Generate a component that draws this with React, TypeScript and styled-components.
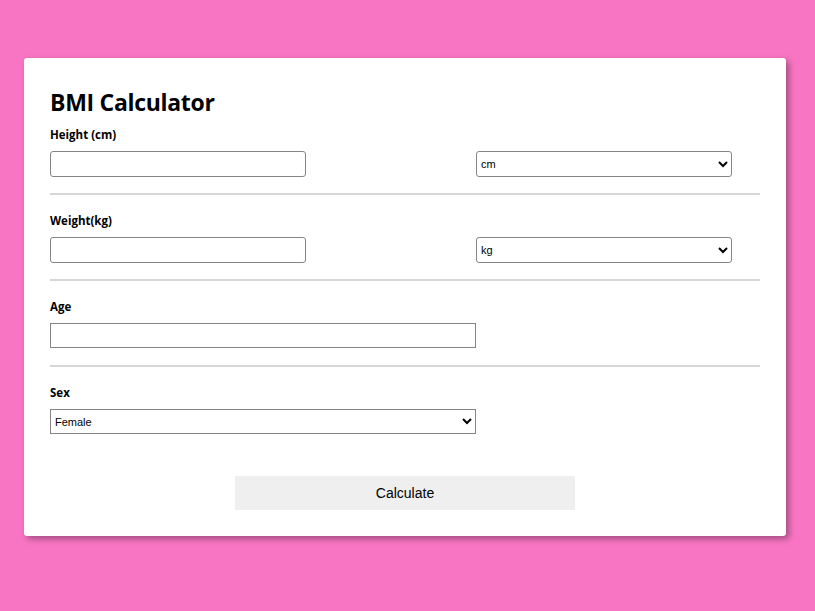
import React from "react";
import styled, { createGlobalStyle } from "styled-components";

const Global = createGlobalStyle`
  html, body { margin: 0; padding: 0; }
  body { background: #f875c3; min-height: 611px; }
`;

const Page = styled.div`
  padding: 58px 0 0 24px;
`;

const Card = styled.div`
  box-sizing: border-box;
  width: 762px;
  height: 478px;
  background: #fff;
  border-radius: 3px;
  box-shadow: 3px 3px 6px rgba(0, 0, 0, 0.35);
  padding: 26px 26px 26px 26px;
  display: flex;
  flex-direction: column;
  font-family: "Open Sans", "Noto Sans", sans-serif;
`;

const Title = styled.h1`
  margin: 0;
  font-size: 23px;
  line-height: 36px;
  font-weight: 700;
  color: #000;
  letter-spacing: -0.3px;
`;

const Label = styled.label`
  display: block;
  font-size: 11.5px;
  font-weight: 700;
  line-height: 16px;
  color: #000;
  margin-top: ${(p: { $top: number }) => p.$top}px;
`;

const Row = styled.div`
  display: grid;
  grid-template-columns: 426px 256px;
  margin-top: ${(p: { $top: number }) => p.$top}px;
`;

const controlBase = `
  box-sizing: border-box;
  font-family: "Liberation Sans", Arial, sans-serif;
  font-size: 11px;
  color: #000;
  background: #fff;
  border: 1px solid #858585;
  margin: 0;
  outline: none;
`;

const TextInput = styled.input<{ $w: number; $h: number; $r: number }>`
  ${controlBase}
  width: ${(p) => p.$w}px;
  height: ${(p) => p.$h}px;
  border-radius: ${(p) => p.$r}px;
  padding: 0 4px;
`;

const Select = styled.select<{ $w: number; $h: number; $r: number }>`
  ${controlBase}
  width: ${(p) => p.$w}px;
  height: ${(p) => p.$h}px;
  border-radius: ${(p) => p.$r}px;
  padding: 0;
`;

const Divider = styled.hr`
  margin: ${(p: { $top: number }) => p.$top}px 0 0 0;
  border: none;
  border-top: 2px solid #d6d6d6;
  height: 0;
  width: 710px;
`;

const ButtonRow = styled.div`
  display: flex;
  justify-content: center;
  margin-top: 42px;
`;

const Button = styled.button`
  width: 340px;
  height: 34px;
  border: none;
  background: #efefef;
  font-family: "Liberation Sans", Arial, sans-serif;
  font-size: 14px;
  color: #000;
  cursor: pointer;
`;

export default function App() {
  return (
    <>
      <Global />
      <Page>
        <Card>
          <Title>BMI Calculator</Title>
          <Label $top={7}>Height (cm)</Label>
          <Row $top={8}>
            <TextInput $w={256} $h={26} $r={3} />
            <Select $w={256} $h={26} $r={3} defaultValue="cm">
              <option value="cm">cm</option>
              <option value="in">in</option>
            </Select>
          </Row>
          <Divider $top={16} />
          <Label $top={18}>Weight(kg)</Label>
          <Row $top={8}>
            <TextInput $w={256} $h={26} $r={3} />
            <Select $w={256} $h={26} $r={3} defaultValue="kg">
              <option value="kg">kg</option>
              <option value="lb">lb</option>
            </Select>
          </Row>
          <Divider $top={16} />
          <Label $top={18}>Age</Label>
          <Row $top={8}>
            <TextInput $w={426} $h={25} $r={0} />
          </Row>
          <Divider $top={17} />
          <Label $top={18}>Sex</Label>
          <Row $top={8}>
            <Select $w={426} $h={25} $r={0} defaultValue="Female">
              <option value="Female">Female</option>
              <option value="Male">Male</option>
            </Select>
          </Row>
          <ButtonRow>
            <Button>Calculate</Button>
          </ButtonRow>
        </Card>
      </Page>
    </>
  );
}
